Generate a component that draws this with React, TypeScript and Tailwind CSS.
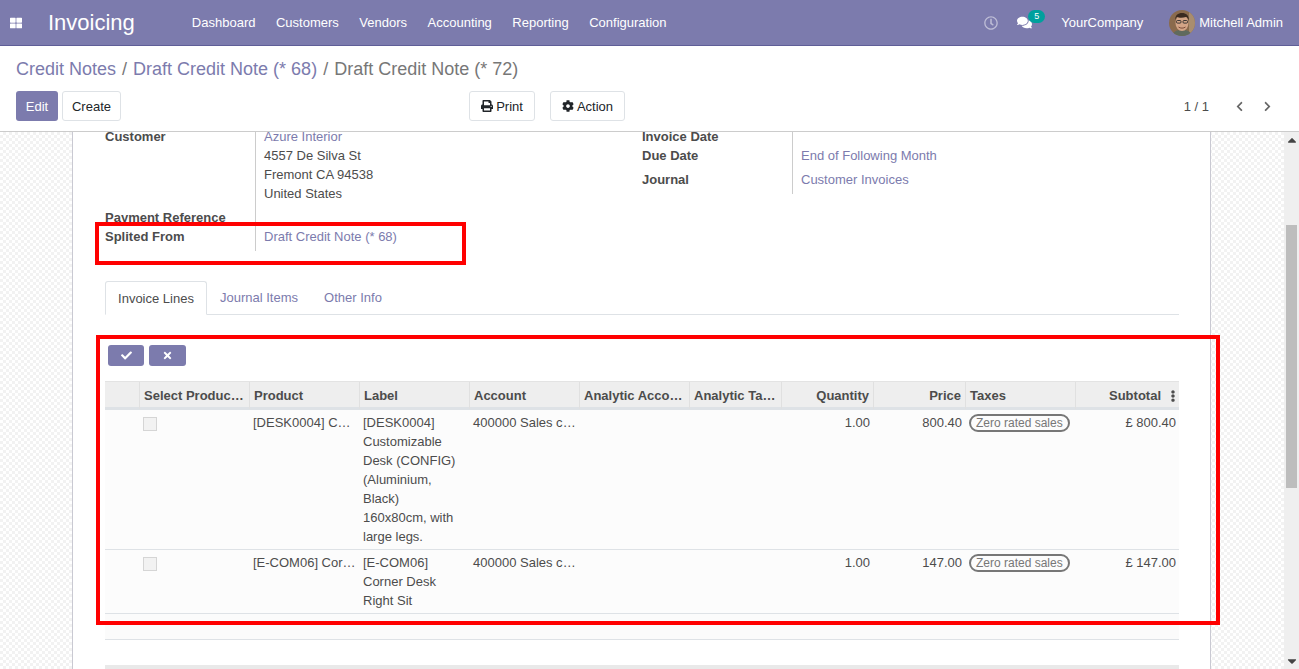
import {
  FaCheck,
  FaChevronLeft,
  FaChevronRight,
  FaCog,
  FaComments,
  FaEllipsisV,
  FaPrint,
  FaRegClock,
  FaThLarge,
  FaTimes,
  FaCaretDown,
  FaCaretUp,
} from "react-icons/fa";

const navItems = ["Dashboard", "Customers", "Vendors", "Accounting", "Reporting", "Configuration"];

const tableCols = "grid grid-cols-[35px_110px_110px_110px_110px_110px_92px_92px_92px_110px_103px]";

const headers = [
  { label: "", right: false },
  { label: "Select Product For Split", right: false },
  { label: "Product", right: false },
  { label: "Label", right: false },
  { label: "Account", right: false },
  { label: "Analytic Account", right: false },
  { label: "Analytic Tags", right: false },
  { label: "Quantity", right: true },
  { label: "Price", right: true },
  { label: "Taxes", right: false },
];

const rows = [
  {
    product: "[DESK0004] Customizable Desk",
    label: ["[DESK0004]", "Customizable", "Desk (CONFIG)", "(Aluminium,", "Black)", "160x80cm, with", "large legs."],
    price: "800.40",
    subtotal: "£ 800.40",
  },
  {
    product: "[E-COM06] Corner Desk Right Sit",
    label: ["[E-COM06]", "Corner Desk", "Right Sit"],
    price: "147.00",
    subtotal: "£ 147.00",
  },
];

function Avatar() {
  return (
    <svg viewBox="0 0 26 26" className="h-[26px] w-[26px] shrink-0 rounded-full">
      <rect width="26" height="26" fill="#8a6a4c" />
      <rect x="20" width="6" height="26" fill="#a98d6e" />
      <path d="M3 26c1-5 5-6 10-6s9 1 10 6z" fill="#5f6a5e" />
      <ellipse cx="13" cy="13" rx="6.5" ry="8" fill="#d3a486" />
      <path d="M6 11c0-6 3-8 7-8s7 2 7 8c-1-3-2-4-3-4-3 1-7 1-9 0-1 1-2 2-2 4z" fill="#3a2a20" />
      <rect x="7.5" y="10.5" width="4.5" height="2.6" rx="1" fill="none" stroke="#2d2d2d" strokeWidth="0.9" />
      <rect x="14" y="10.5" width="4.5" height="2.6" rx="1" fill="none" stroke="#2d2d2d" strokeWidth="0.9" />
      <path d="M9.5 17c2 1.5 5 1.5 7 0" fill="none" stroke="#7a4c3a" strokeWidth="1" />
    </svg>
  );
}

function TaxBadge() {
  return (
    <span className="inline-block h-[18px] rounded-full border-2 border-[#777777] px-[5px] text-[12px] leading-[14px] text-[#777777]">
      Zero rated sales
    </span>
  );
}

export default function App() {
  return (
    <div className="relative flex h-[669px] flex-col overflow-hidden bg-white font-['Liberation_Sans',Arial,sans-serif] text-[13px] leading-[19px] text-[#4c4c4c]">
      <header className="flex h-[46px] shrink-0 items-center border-b border-[#5f5e97] bg-[#7c7bad] text-white">
        <FaThLarge className="ml-[10px] h-[12px] w-[12px]" />
        <span className="ml-[26px] text-[22px] font-light">Invoicing</span>
        <nav className="ml-[57px] flex gap-[20.5px]">
          {navItems.map((item) => (
            <span key={item}>{item}</span>
          ))}
        </nav>
        <div className="ml-auto flex items-center pr-4">
          <FaRegClock className="h-[14px] w-[14px] text-white/50" />
          <span className="relative ml-[19px] mr-[29px]">
            <FaComments className="h-[15px] w-[15px]" />
            <span className="absolute -top-[5px] left-[11px] h-[13px] w-[17px] rounded-full bg-[#00a09d] text-center text-[9px] leading-[13px]">
              5
            </span>
          </span>
          <span>YourCompany</span>
          <span className="ml-[26px] mr-1">
            <Avatar />
          </span>
          <span>Mitchell Admin</span>
        </div>
      </header>

      <section className="h-[86px] shrink-0 border-b border-[#cccccc] px-4">
        <div className="mt-[12px] flex h-[22px] items-center gap-[6px] text-[18px] leading-[22px] text-[#777777]">
          <span className="text-[#7c7bad]">Credit Notes</span>
          <span>/</span>
          <span className="text-[#7c7bad]">Draft Credit Note (* 68)</span>
          <span>/</span>
          <span>Draft Credit Note (* 72)</span>
        </div>
        <div className="mt-[11px] flex h-[30px] items-center">
          <button className="h-[30px] w-[42px] rounded-[3px] bg-[#7c7bad] text-white">Edit</button>
          <button className="ml-1 h-[30px] w-[59px] rounded-[3px] border border-[#dee2e6] text-[#212529]">Create</button>
          <button className="ml-[348px] flex h-[30px] w-[66px] items-center justify-center gap-[3px] rounded-[3px] border border-[#dee2e6] text-[#212529]">
            <FaPrint className="h-[12px] w-[12px]" />
            Print
          </button>
          <button className="ml-[15px] flex h-[30px] w-[75px] items-center justify-center gap-[3px] rounded-[3px] border border-[#dee2e6] text-[#212529]">
            <FaCog className="h-[12px] w-[12px]" />
            Action
          </button>
          <span className="ml-auto text-[#4c4c4c]">1 / 1</span>
          <FaChevronLeft className="ml-[25px] h-[11px] w-[11px] text-[#666666]" />
          <FaChevronRight className="ml-[17px] mr-[10px] h-[11px] w-[11px] text-[#666666]" />
        </div>
      </section>

      <main className="flex min-h-0 flex-1">
        <div className="flex min-w-0 flex-1 justify-center overflow-hidden bg-[repeating-conic-gradient(#f2f2f2_0_25%,#ffffff_0_50%)] bg-[length:6px_6px] pl-[72px] pr-[73px]">
          <div className="-mt-[5px] h-[600px] w-full border-x border-[#c9c9d2] bg-white pl-[32px] pr-[31px]">
            <div className="flex">
              <div className="w-[537px]">
                <div className="flex">
                  <div className="flex w-[150px] flex-col font-bold">
                    <span className="h-[81px]">Customer</span>
                    <span className="h-[19px]">Payment Reference</span>
                    <span className="h-[24px]">Splited From</span>
                  </div>
                  <div className="h-[124px] border-l border-[#cccccc] pl-2">
                    <p className="text-[#7c7bad]">Azure Interior</p>
                    <p>4557 De Silva St</p>
                    <p>Fremont CA 94538</p>
                    <p>United States</p>
                    <p className="mt-[24px] text-[#7c7bad]">Draft Credit Note (* 68)</p>
                  </div>
                </div>
              </div>
              <div className="flex h-[67px]">
                <div className="flex w-[150px] flex-col font-bold">
                  <span className="h-[19px]">Invoice Date</span>
                  <span className="h-[24px]">Due Date</span>
                  <span>Journal</span>
                </div>
                <div className="border-l border-[#cccccc] pl-2 text-[#7c7bad]">
                  <p className="h-[19px]" />
                  <p className="h-[24px]">End of Following Month</p>
                  <p>Customer Invoices</p>
                </div>
              </div>
            </div>

            <div className="mt-[30px] flex h-[34px] border-b border-[#dee2e6] text-[#7c7bad]">
              <span className="h-[34px] w-[102px] rounded-t-[3px] border border-b-white border-[#dee2e6] bg-white pt-[7px] text-center text-[#4c4c4c]">
                Invoice Lines
              </span>
              <span className="ml-[13px] pt-[7px]">Journal Items</span>
              <span className="ml-[26px] pt-[7px]">Other Info</span>
            </div>

            <div className="ml-[3px] mt-[30px] flex gap-[5px]">
              <button className="flex h-[21px] w-[36px] items-center justify-center rounded-[3px] bg-[#7c7bad] text-white">
                <FaCheck className="h-[11px] w-[11px]" />
              </button>
              <button className="flex h-[21px] w-[37px] items-center justify-center rounded-[3px] bg-[#7c7bad] text-white">
                <FaTimes className="h-[11px] w-[11px]" />
              </button>
            </div>

            <div className={`${tableCols} mt-[15px] h-[29px] border-y border-[#e3e3e3] border-b-[3px] border-b-[#dee2e6] bg-[#eeeeee] font-bold`}>
              {headers.map((h, i) => (
                <div
                  key={i}
                  className={`truncate border-r border-[#e0e0e0] px-1 py-1 ${h.right ? "text-right" : ""}`}
                >
                  {h.label}
                </div>
              ))}
              <div className="flex items-start justify-end py-1 pr-[3px]">
                <span className="mr-[9px]">Subtotal</span>
                <FaEllipsisV className="mt-[4px] h-[12px] w-[6px]" />
              </div>
            </div>

            {rows.map((row) => (
              <div key={row.product} className={`${tableCols} border-b border-[#dee2e6] bg-[#fcfcfc] pb-[3px] pt-[3px]`}>
                <div />
                <div className="px-1 pt-[1px]">
                  <span className="ml-[-1px] mt-[3px] block h-[14px] w-[14px] border border-[#d5d5d5] bg-[#f2f2f2]" />
                </div>
                <div className="truncate pl-[3px] pr-1">{row.product}</div>
                <div className="pl-[3px] pr-1">
                  {row.label.map((line) => (
                    <p key={line}>{line}</p>
                  ))}
                </div>
                <div className="truncate pl-[3px] pr-1">400000 Sales christmas</div>
                <div />
                <div />
                <div className="pr-1 text-right">1.00</div>
                <div className="pr-1 text-right">{row.price}</div>
                <div className="pl-[3px]">
                  <TaxBadge />
                </div>
                <div className="pr-[3px] text-right">{row.subtotal}</div>
              </div>
            ))}

            <div className="h-[26px] border-b border-[#dee2e6] bg-[#fbfbfb]" />
            <div className="mt-[25px] h-[8px] bg-[#e9e9e9]" />
          </div>
        </div>

        <aside className="flex w-[15px] shrink-0 flex-col items-center bg-[#efefef] text-[#444444]">
          <FaCaretUp className="mt-[1px] h-[14px] w-[14px]" />
          <div className="mt-[78px] h-[263px] w-[11px] bg-[#bdbdbd]" />
          <FaCaretDown className="mb-[1px] mt-auto h-[14px] w-[14px]" />
        </aside>
      </main>

      {/* annotation boxes drawn on top of the screenshot */}
      <div className="absolute left-[95px] top-[222px] h-[43px] w-[371px] border-[4px] border-[#ff0000]" />
      <div className="absolute left-[96px] top-[335px] h-[290px] w-[1124px] border-[4px] border-[#ff0000]" />
    </div>
  );
}
